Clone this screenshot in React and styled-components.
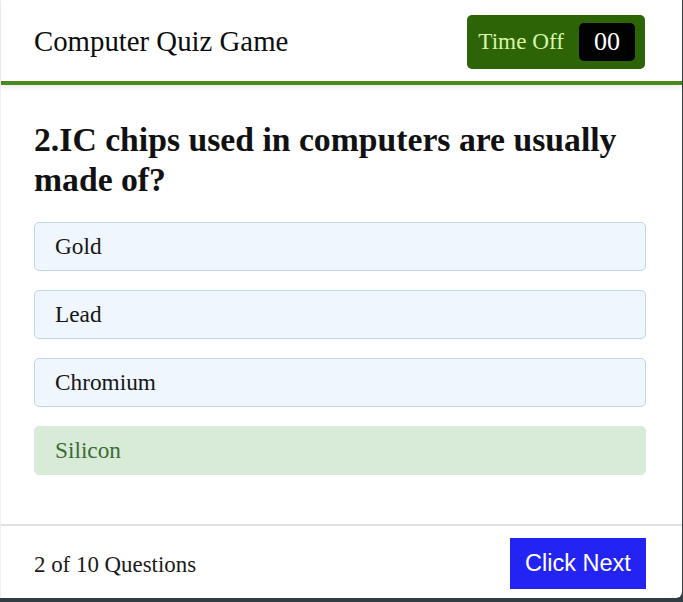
import React from "react";
import styled, { createGlobalStyle } from "styled-components";

const Global = createGlobalStyle`
  html, body { margin: 0; padding: 0; }
  body {
    background: #323c43;
    font-family: "Liberation Serif", "Times New Roman", serif;
  }
`;

const Card = styled.div`
  width: 682px;
  background: #ffffff;
  border-left: 1px solid #f1f1f1;
  box-sizing: border-box;
  border-bottom-right-radius: 6px;
  display: flex;
  flex-direction: column;
`;

const Header = styled.header`
  height: 81px;
  display: flex;
  align-items: center;
  justify-content: space-between;
  padding: 0 37px 0 33px;
  border-bottom: 4px solid #4a8a1d;
  box-shadow: 0 3px 5px rgba(0, 0, 0, 0.08);
`;

const Title = styled.h1`
  margin: 0;
  font-size: 28.8px;
  font-weight: 400;
  color: #0d0d0d;
  position: relative;
  top: 1px;
`;

const Timer = styled.div`
  display: flex;
  align-items: center;
  gap: 15px;
  height: 54px;
  box-sizing: border-box;
  padding: 0 10px 0 11px;
  background: #2d6405;
  border-radius: 5px;
  position: relative;
  top: 1px;
`;

const TimerLabel = styled.span`
  color: #d8f5a8;
  font-size: 23.2px;
`;

const TimerValue = styled.span`
  display: flex;
  align-items: center;
  justify-content: center;
  width: 56px;
  height: 38px;
  background: #020202;
  border-radius: 5px;
  color: #ffffff;
  font-size: 26px;
`;

const Main = styled.main`
  padding: 35px 36px 49px 33px;
  display: flex;
  flex-direction: column;
`;

const Question = styled.h2`
  margin: 0 0 22px;
  font-size: 33.7px;
  line-height: 40px;
  font-weight: 700;
  color: #111;
`;

const Options = styled.ul`
  list-style: none;
  margin: 0;
  padding: 0;
  display: flex;
  flex-direction: column;
  gap: 19px;
`;

const Option = styled.li`
  height: 49px;
  box-sizing: border-box;
  display: flex;
  align-items: center;
  padding: 0 20px;
  font-size: 23.3px;
  border-radius: 5px;
  border: 1px solid ${(p) => (p.$correct ? "#d8ebd8" : "#bdd6ec")};
  background: ${(p) => (p.$correct ? "#d8ebd8" : "#eff6fe")};
  color: ${(p) => (p.$correct ? "#3d6a35" : "#161616")};
`;

const Footer = styled.footer`
  border-top: 2px solid #e2e2e2;
  height: 72px;
  display: flex;
  align-items: center;
  justify-content: space-between;
  padding: 0 36px 0 33px;
`;

const Count = styled.span`
  font-size: 22.9px;
  color: #1a1a1a;
  position: relative;
  top: 3px;
`;

const NextButton = styled.button`
  width: 136px;
  height: 51px;
  border: none;
  border-radius: 0;
  background: #2323f3;
  color: #ffffff;
  font-family: "Liberation Sans", Arial, sans-serif;
  font-size: 23.5px;
  padding: 0;
  position: relative;
  top: 1px;
`;

const options = [
  { label: "Gold" },
  { label: "Lead" },
  { label: "Chromium" },
  { label: "Silicon", correct: true },
];

export default function App() {
  return (
    <>
      <Global />
      <Card>
        <Header>
          <Title>Computer Quiz Game</Title>
          <Timer>
            <TimerLabel>Time Off</TimerLabel>
            <TimerValue>00</TimerValue>
          </Timer>
        </Header>
        <Main>
          <Question>2.IC chips used in computers are usually made of?</Question>
          <Options>
            {options.map((o) => (
              <Option key={o.label} $correct={o.correct}>
                {o.label}
              </Option>
            ))}
          </Options>
        </Main>
        <Footer>
          <Count>2 of 10 Questions</Count>
          <NextButton>Click Next</NextButton>
        </Footer>
      </Card>
    </>
  );
}
